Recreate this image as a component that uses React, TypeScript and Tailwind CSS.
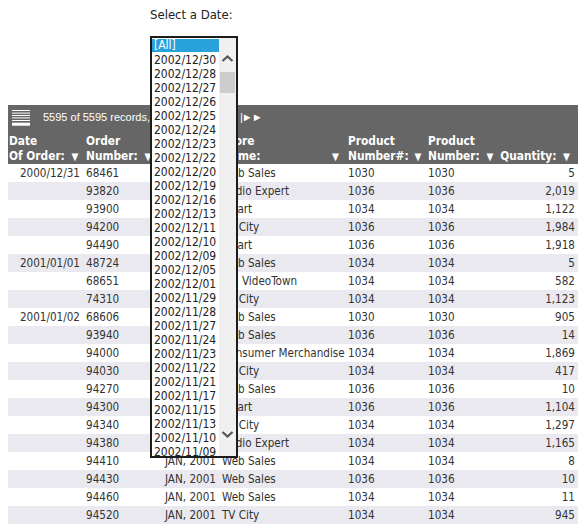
import React from 'react'

// rows of the report: date, order, month, store, product#, product, quantity
const rows = [
  ['2000/12/31', '68461', 'DEC, 2000', 'Web Sales', '1030', '1030', '5'],
  ['', '93820', 'DEC, 2000', 'Audio Expert', '1036', '1036', '2,019'],
  ['', '93900', 'DEC, 2000', 'eMart', '1034', '1034', '1,122'],
  ['', '94200', 'DEC, 2000', 'TV City', '1036', '1036', '1,984'],
  ['', '94490', 'DEC, 2000', 'eMart', '1036', '1036', '1,918'],
  ['2001/01/01', '48724', 'JAN, 2001', 'Web Sales', '1034', '1034', '5'],
  ['', '68651', 'JAN, 2001', 'Big VideoTown', '1034', '1034', '582'],
  ['', '74310', 'JAN, 2001', 'TV City', '1034', '1034', '1,123'],
  ['2001/01/02', '68606', 'JAN, 2001', 'Web Sales', '1030', '1030', '905'],
  ['', '93940', 'JAN, 2001', 'Web Sales', '1036', '1036', '14'],
  ['', '94000', 'JAN, 2001', 'Consumer Merchandise', '1034', '1034', '1,869'],
  ['', '94030', 'JAN, 2001', 'TV City', '1034', '1034', '417'],
  ['', '94270', 'JAN, 2001', 'Web Sales', '1036', '1036', '10'],
  ['', '94300', 'JAN, 2001', 'eMart', '1036', '1036', '1,104'],
  ['', '94340', 'JAN, 2001', 'TV City', '1034', '1034', '1,297'],
  ['', '94380', 'JAN, 2001', 'Audio Expert', '1034', '1034', '1,165'],
  ['', '94410', 'JAN, 2001', 'Web Sales', '1034', '1034', '8'],
  ['', '94430', 'JAN, 2001', 'Web Sales', '1036', '1036', '10'],
  ['', '94460', 'JAN, 2001', 'Web Sales', '1034', '1034', '11'],
  ['', '94520', 'JAN, 2001', 'TV City', '1034', '1034', '945'],
]

const dates = [
  '2002/12/30', '2002/12/28', '2002/12/27', '2002/12/26', '2002/12/25', '2002/12/24',
  '2002/12/23', '2002/12/22', '2002/12/20', '2002/12/19', '2002/12/16', '2002/12/13',
  '2002/12/11', '2002/12/10', '2002/12/09', '2002/12/05', '2002/12/01', '2002/11/29',
  '2002/11/28', '2002/11/27', '2002/11/24', '2002/11/23', '2002/11/22', '2002/11/21',
  '2002/11/17', '2002/11/15', '2002/11/13', '2002/11/10', '2002/11/09',
]

const cols = 'grid grid-cols-[76px_78px_58px_126px_80px_78px_74px]'

function Arrow({ className = '' }: { className?: string }) {
  return <span className={`text-[10px] ${className}`}>▼</span>
}

export default function App() {
  return (
    <div className="relative w-[588px] h-[532px] bg-white text-[#333] font-['DejaVu_Sans_Condensed','DejaVu_Sans',sans-serif] text-[11.6px]">
      {/* etiqueta */}
      <div className="pl-[150px] pt-[5px] h-[105px] text-[13px] text-[#222]">Select a Date:</div>

      {/* tabla */}
      <div className="ml-[8px] w-[570px]">
        <div className="bg-[#666666] h-[25px] flex items-center text-white">
          <svg width="18" height="17" viewBox="0 0 18 17" className="ml-[4px] mt-[1px]">
            <rect x="0" y="0" width="18" height="1" fill="#fff" />
            <rect x="0" y="2.6" width="18" height="1" fill="#fff" />
            <rect x="0" y="5" width="18" height="1" fill="#fff" />
            <rect x="0" y="7.4" width="18" height="1" fill="#fff" />
            <rect x="0" y="10" width="18" height="1" fill="#fff" />
            <rect x="0" y="12.7" width="18" height="3" fill="#fff" />
          </svg>
          <span className="ml-[13px] w-[197px] whitespace-nowrap overflow-hidden font-['Liberation_Sans',Arial,sans-serif] text-[11px]">
            5595 of 5595 records, page 1 of 280
          </span>
          <span className="font-['Liberation_Sans',Arial,sans-serif] text-[11px] tracking-[-1px]">|►►</span>
        </div>
        <div className={`${cols} bg-[#666666] h-[34px] text-white font-bold text-[11.8px] leading-[15px]`}>
          <div className="pl-[1px] flex flex-col justify-end">
            <span>Date</span>
            <span className="whitespace-nowrap">Of Order: <Arrow className="ml-[3px]" /></span>
          </div>
          <div className="pl-[2px] flex flex-col justify-end">
            <span>Order</span>
            <span className="whitespace-nowrap">Number: <Arrow className="ml-[3px]" /></span>
          </div>
          <div className="pl-[3px] flex flex-col justify-end">
            <span>Month</span>
            <span className="whitespace-nowrap">Of Order: <Arrow /></span>
          </div>
          <div className="pl-[2px] flex flex-col justify-end">
            <span>Store</span>
            <span className="whitespace-nowrap flex justify-between pr-[7px]">Name: <Arrow /></span>
          </div>
          <div className="pl-[2px] flex flex-col justify-end">
            <span>Product</span>
            <span className="whitespace-nowrap">Number#: <Arrow className="ml-[2px]" /></span>
          </div>
          <div className="pl-[2px] flex flex-col justify-end">
            <span>Product</span>
            <span className="whitespace-nowrap">Number: <Arrow className="ml-[3px]" /></span>
          </div>
          <div className="flex flex-col justify-end items-end pr-[8px]">
            <span className="whitespace-nowrap">Quantity: <Arrow className="ml-[3px]" /></span>
          </div>
        </div>
        {rows.map((r, i) => (
          <div key={i} className={`${cols} h-[18px] items-center pt-[1px] ${i % 2 ? 'bg-[#e9e9ef]' : 'bg-white'}`}>
            <span className="text-right pr-[4px]">{r[0]}</span>
            <span className="pl-[2px]">{r[1]}</span>
            <span className="pl-[3px] whitespace-nowrap">{r[2]}</span>
            <span className="pl-[2px] whitespace-nowrap overflow-hidden">{r[3]}</span>
            <span className="pl-[2px]">{r[4]}</span>
            <span className="pl-[2px]">{r[5]}</span>
            <span className="text-right pr-[3px]">{r[6]}</span>
          </div>
        ))}
      </div>

      {/* lista desplegable abierta */}
      <div className="absolute left-[150px] top-[36px] w-[88px] h-[422px] border-2 border-[#1c1c1c] bg-white flex text-[12px]">
        <div className="flex-1 pt-[1px] text-[#222]">
          <div className="bg-[#29a1da] text-white h-[13px] leading-[13px] pl-[2px] mb-[1px]">[All]</div>
          {dates.map((d) => (
            <div key={d} className="h-[14px] leading-[14px] pl-[2px] whitespace-nowrap">{d}</div>
          ))}
        </div>
        <div className="w-[17px] bg-[#f0f0f0] relative">
          <svg width="17" height="10" viewBox="0 0 17 10" className="absolute left-0 top-[16px]">
            <path d="M3.5 7 L8.5 2.5 L13.5 7" stroke="#555" strokeWidth="2.2" fill="none" />
          </svg>
          <div className="absolute left-[1px] right-[1px] top-[34px] h-[21px] bg-[#cdcdcd]" />
          <svg width="17" height="10" viewBox="0 0 17 10" className="absolute left-0 top-[391px]">
            <path d="M3.5 3 L8.5 7.5 L13.5 3" stroke="#555" strokeWidth="2.2" fill="none" />
          </svg>
        </div>
      </div>
    </div>
  )
}
